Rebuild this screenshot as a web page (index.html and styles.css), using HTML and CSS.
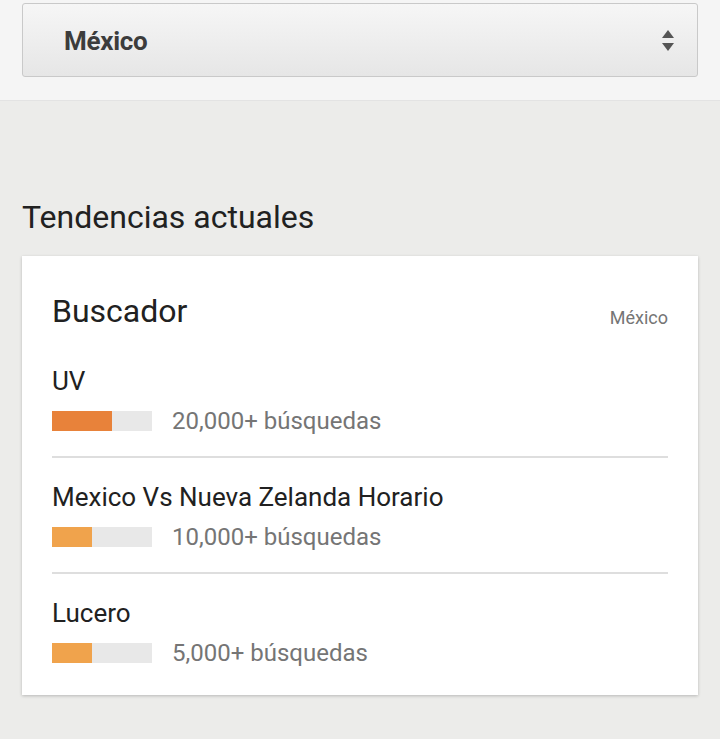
FILE: index.html
```html
<!DOCTYPE html>
<html lang="es">
<head>
<meta charset="utf-8">
<link rel="stylesheet" href="styles.css">
</head>
<body>
<div class="top">
  <div class="select">
    <span class="select-label">México</span>
    <svg class="select-arrows" width="14" height="24" viewBox="0 0 14 24"><path d="M7 1 L13 9 L1 9 Z" fill="#555"/><path d="M1 14 L13 14 L7 22 Z" fill="#555"/></svg>
  </div>
</div>
<main class="content">
  <h2 class="section-title">Tendencias actuales</h2>
  <section class="card">
    <div class="card-header">
      <h3 class="card-title">Buscador</h3>
      <span class="card-region">México</span>
    </div>
    <div class="item">
      <div class="item-title">UV</div>
      <div class="item-stats">
        <div class="bar"><div class="bar-fill bar-fill--dark" style="width:60px"></div></div>
        <span class="item-count">20,000+ búsquedas</span>
      </div>
    </div>
    <div class="item">
      <div class="item-title">Mexico Vs Nueva Zelanda Horario</div>
      <div class="item-stats">
        <div class="bar"><div class="bar-fill" style="width:40px"></div></div>
        <span class="item-count">10,000+ búsquedas</span>
      </div>
    </div>
    <div class="item">
      <div class="item-title">Lucero</div>
      <div class="item-stats">
        <div class="bar"><div class="bar-fill" style="width:40px"></div></div>
        <span class="item-count">5,000+ búsquedas</span>
      </div>
    </div>
  </section>
</main>
</body>
</html>
```
FILE: styles.css
```css
* { box-sizing: border-box; }
html, body { margin: 0; padding: 0; }
body {
  background: #ececea;
  font-family: Roboto, "Noto Sans", sans-serif;
  color: #212121;
  width: 720px;
  height: 739px;
  overflow: hidden;
}
.top {
  background: #f5f5f5;
  height: 101px;
  border-bottom: 1px solid #e3e3e3;
  padding: 3px 22px 0 22px;
}
.select {
  height: 74px;
  border: 1px solid #c9c9c9;
  border-radius: 3px;
  background: linear-gradient(#f6f6f6, #e6e6e6);
  display: flex;
  align-items: center;
  justify-content: space-between;
  padding: 2px 22px 0 41px;
}
.select-label {
  font-size: 26px;
  font-weight: 700;
  color: #3c3c3c;
  letter-spacing: -0.3px;
}
.select-arrows { display: block; }
.content {
  padding: 0 22px;
}
.section-title {
  margin: 0;
  padding-top: 96px;
  font-size: 32px;
  line-height: 40px;
  font-weight: 400;
  color: #212121;
  height: 155px;
}
.card {
  background: #fff;
  box-shadow: 0 1px 3px rgba(0,0,0,0.22);
  padding: 36px 30px 7px 30px;
  height: 439px;
}
.card-header {
  display: flex;
  justify-content: space-between;
  align-items: flex-start;
  height: 38px;
  margin-bottom: 12px;
}
.card-title {
  margin: 0;
  font-size: 32px;
  line-height: 38px;
  font-weight: 400;
  color: #212121;
}
.card-region {
  font-size: 18px;
  line-height: 24px;
  margin-top: 14px;
  color: #757575;
}
.item {
  padding: 23px 0;
  border-bottom: 2px solid #dedede;
}
.item:last-child { border-bottom: 0; }
.item-title {
  font-size: 26px;
  line-height: 32px;
  margin-bottom: 12px;
  color: #212121;
}
.item-stats {
  display: flex;
  align-items: center;
  height: 24px;
}
.bar {
  width: 100px;
  height: 20px;
  background: #e8e8e8;
  margin-right: 20px;
}
.bar-fill {
  height: 100%;
  background: #f0a34c;
}
.bar-fill--dark { background: #e8823a; }
.item-count {
  font-size: 24px;
  color: #757575;
}
```
